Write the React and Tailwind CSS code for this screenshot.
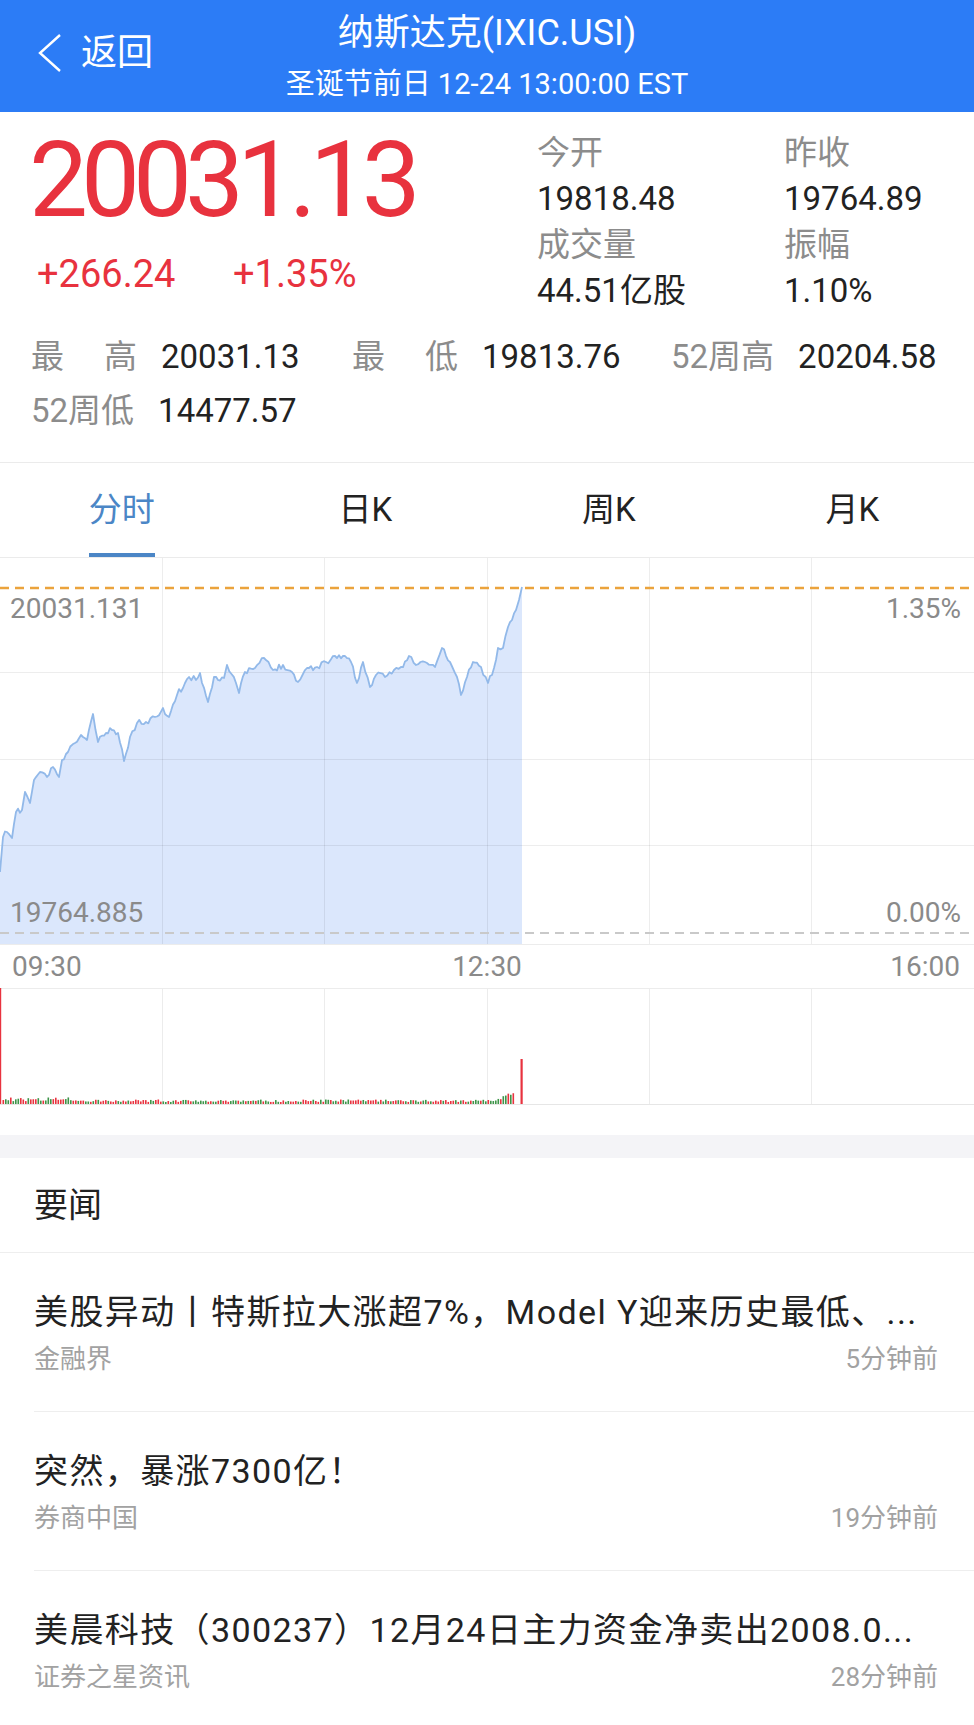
import React from 'react';

// price line, chart-space coords (x px, y px from chart top)
const RAW = [
  [0, 314], [3, 279], [7, 274], [12, 280], [16, 254], [22, 252], [25, 234], [30, 245], [34, 222],
  [40, 214], [47, 219], [53, 209], [59, 219], [62, 202], [68, 194], [75, 185], [81, 177], [87, 182],
  [93, 156], [98, 184], [106, 175], [112, 172], [118, 175], [124, 203], [130, 179], [137, 165],
  [146, 164], [155, 159], [163, 150], [169, 159], [177, 137], [185, 125], [189, 119], [196, 122],
  [200, 115], [208, 144], [214, 119], [224, 120], [227, 107], [236, 125], [239, 135], [245, 114],
  [255, 110], [264, 100], [273, 112], [283, 107], [292, 114], [298, 124], [307, 110], [317, 109],
  [326, 104], [335, 98], [345, 98], [351, 104], [357, 125], [363, 104], [370, 129], [376, 117],
  [385, 119], [394, 112], [401, 109], [409, 98], [416, 107], [425, 104], [435, 109], [442, 90],
  [450, 104], [457, 119], [461, 137], [467, 119], [473, 104], [481, 109], [488, 125], [494, 110],
  [498, 90], [503, 90], [508, 69], [512, 62], [516, 52], [519, 42], [522, 29],
];

function rng(seed) {
  let s = seed;
  return () => {
    s = (s * 16807) % 2147483647;
    return (s - 1) / 2147483646;
  };
}

function buildLine() {
  const r = rng(11);
  const pts = [];
  for (let i = 0; i < RAW.length - 1; i++) {
    const [x0, y0] = RAW[i];
    const [x1, y1] = RAW[i + 1];
    const steps = Math.max(1, Math.round((x1 - x0) / 2.2));
    for (let k = 0; k < steps; k++) {
      const t = k / steps;
      const j = k === 0 ? 0 : (r() - 0.5) * 6;
      pts.push([x0 + (x1 - x0) * t, y0 + (y1 - y0) * t + j]);
    }
  }
  pts.push(RAW[RAW.length - 1]);
  return pts;
}

function buildVolume() {
  const r = rng(5);
  const bars = [];
  for (let i = 1; i < 206; i++) {
    const x = i * 2.5;
    let h = 2 + r() * 2.5;
    if (i < 30) h += r() * 3;
    if (i > 198) h += (i - 198) * 1.2;
    bars.push({ x, h, up: r() > 0.45 });
  }
  return bars;
}

const LINE = buildLine();
const LINE_D = LINE.map(([x, y], i) => `${i ? 'L' : 'M'}${x.toFixed(1)} ${y.toFixed(1)}`).join(' ');
const FILL_D = `${LINE_D} L522 387 L0 387 Z`;
const VOL = buildVolume();
const VCOLS = [162, 324, 487, 649, 811];

const PriceChart = () => (
  <div className="relative h-[387px]">
    <svg width="974" height="387" viewBox="0 0 974 387" className="block">
      <path d={FILL_D} fill="#dbe7fc" />
      {VCOLS.map((x) => (
        <line key={x} x1={x + 0.5} y1="0" x2={x + 0.5} y2="387" stroke="#000" strokeOpacity="0.07" />
      ))}
      {[114, 201, 287].map((y) => (
        <line key={y} x1="0" y1={y + 0.5} x2="974" y2={y + 0.5} stroke="#000" strokeOpacity="0.07" />
      ))}
      <path d={LINE_D} fill="none" stroke="#92b9e9" strokeWidth="1.8" strokeLinejoin="round" />
      <line x1="0" y1="30" x2="974" y2="30" stroke="#eba33c" strokeWidth="2.5" strokeDasharray="9 6" />
      <line x1="0" y1="375" x2="974" y2="375" stroke="#c9c9c9" strokeWidth="2" strokeDasharray="9 6" />
      <line x1="0" y1="386.5" x2="974" y2="386.5" stroke="#ececec" />
    </svg>
    <span className="absolute left-[10px] top-[37px] text-[28px] leading-[28px] text-[#8a8a8a]">20031.131</span>
    <span className="absolute right-[13px] top-[37px] text-[28px] leading-[28px] text-[#8a8a8a]">1.35%</span>
    <span className="absolute left-[10px] top-[341px] text-[28px] leading-[28px] text-[#8a8a8a]">19764.885</span>
    <span className="absolute right-[13px] top-[341px] text-[28px] leading-[28px] text-[#8a8a8a]">0.00%</span>
  </div>
);

const VolumeChart = () => (
  <svg width="974" height="117" viewBox="0 0 974 117" className="block">
    <line x1="0" y1="0.5" x2="974" y2="0.5" stroke="#ececec" />
    {VCOLS.map((x) => (
      <line key={x} x1={x + 0.5} y1="0" x2={x + 0.5} y2="117" stroke="#ececec" />
    ))}
    <rect x="0" y="0" width="1.2" height="117" fill="#e8333f" />
    {VOL.map((b) => (
      <rect key={b.x} x={b.x} y={116 - b.h} width="1.6" height={b.h} fill={b.up ? '#e8333f' : '#3d9448'} />
    ))}
    <rect x="520.5" y="71" width="2.2" height="45" fill="#e8333f" />
    <line x1="0" y1="116.5" x2="974" y2="116.5" stroke="#e6e6e6" />
  </svg>
);

const Stat = ({ label, value, wide }) => (
  <div className="flex items-center">
    {wide ? (
      <span className="w-[106px] flex justify-between text-[#8c8c8c]">
        <span>{label[0]}</span>
        <span>{label[1]}</span>
      </span>
    ) : (
      <span className="text-[#8c8c8c]">{label}</span>
    )}
    <span className="ml-[24px] text-[#222]">{value}</span>
  </div>
);

const NewsItem = ({ title, source, time }) => (
  <div className="h-[159px] pl-[34px] flex flex-col">
    <div className="pt-[37px] pr-[40px] text-[34px] leading-[44px] tracking-[1.4px] text-[#222] whitespace-nowrap overflow-hidden">
      {title}
    </div>
    <div className="mt-[8px] pr-[36px] flex justify-between text-[26px] leading-[34px] text-[#a2a2a2]">
      <span>{source}</span>
      <span>{time}</span>
    </div>
    <div className="mt-auto h-px bg-[#eeeeee]" />
  </div>
);

export default function App() {
  return (
    <div className="w-[974px] h-[1725px] overflow-hidden bg-white font-[Roboto,'Noto_Sans_CJK_SC',sans-serif]">
      {/* header */}
      <div className="relative h-[112px] bg-[#2c7cf6] text-white flex flex-col items-center">
        <div className="absolute left-[37px] top-[33px] flex items-center">
          <svg width="26" height="40" viewBox="0 0 26 40">
            <polyline points="23,2 3,20 23,38" fill="none" stroke="white" strokeWidth="2.4" />
          </svg>
          <span className="ml-[18px] text-[36px] leading-[40px]">返回</span>
        </div>
        <div className="mt-[12px] text-[36px] leading-[42px]">纳斯达克(IXIC.USI)</div>
        <div className="mt-[13px] text-[29px] leading-[34px]">圣诞节前日 12-24 13:00:00 EST</div>
      </div>

      {/* quote */}
      <div className="pb-[24px]">
        <div className="flex">
          <div className="w-[537px] pl-[29px] pt-[16px]">
            <div className="text-[105px] leading-none tracking-[-7px] text-[#e8323e]">20031.13</div>
            <div className="mt-[18px] pl-[8px] flex text-[38px] leading-[46px] text-[#e8323e]">
              <span className="w-[196px]">+266.24</span>
              <span>+1.35%</span>
            </div>
          </div>
          <div className="flex-1 pt-[18px] grid grid-cols-[247px_1fr] text-[33px] leading-[46px]">
            <span className="text-[#8c8c8c]">今开</span>
            <span className="text-[#8c8c8c]">昨收</span>
            <span className="text-[#222]">19818.48</span>
            <span className="text-[#222]">19764.89</span>
            <span className="text-[#8c8c8c]">成交量</span>
            <span className="text-[#8c8c8c]">振幅</span>
            <span className="text-[#222]">44.51亿股</span>
            <span className="text-[#222]">1.10%</span>
          </div>
        </div>
        <div className="mt-[16px] pl-[31px] grid grid-cols-[321px_319px_1fr] text-[33px] leading-[54px]">
          <Stat label="最高" value="20031.13" wide />
          <Stat label="最低" value="19813.76" wide />
          <Stat label="52周高" value="20204.58" />
          <Stat label="52周低" value="14477.57" />
        </div>
      </div>

      {/* tabs */}
      <div className="grid grid-cols-4 h-[96px] border-y border-[#ebebeb] text-[33px]">
        {['分时', '日K', '周K', '月K'].map((t, i) => (
          <div key={t} className="relative flex items-center justify-center">
            <span className={i === 0 ? 'text-[#4b86c6]' : 'text-[#222]'}>{t}</span>
            {i === 0 && <span className="absolute bottom-0 h-[4px] w-[66px] bg-[#4b86c6]" />}
          </div>
        ))}
      </div>

      <PriceChart />

      {/* time axis */}
      <div className="h-[43px] grid grid-cols-3 items-center text-[28px] leading-[30px] text-[#8a8a8a]">
        <span className="pl-[12px]">09:30</span>
        <span className="text-center">12:30</span>
        <span className="text-right pr-[14px]">16:00</span>
      </div>

      <VolumeChart />

      <div className="h-[30px]" />
      <div className="h-[23px] bg-[#f4f4f7]" />

      {/* news */}
      <div className="h-[95px] pl-[34px] flex items-center text-[34px] text-[#222] border-b border-[#eeeeee]">要闻</div>
      <NewsItem title="美股异动丨特斯拉大涨超7%，Model Y迎来历史最低、..." source="金融界" time="5分钟前" />
      <NewsItem title="突然，暴涨7300亿！" source="券商中国" time="19分钟前" />
      <NewsItem title="美晨科技（300237）12月24日主力资金净卖出2008.0..." source="证券之星资讯" time="28分钟前" />
    </div>
  );
}
